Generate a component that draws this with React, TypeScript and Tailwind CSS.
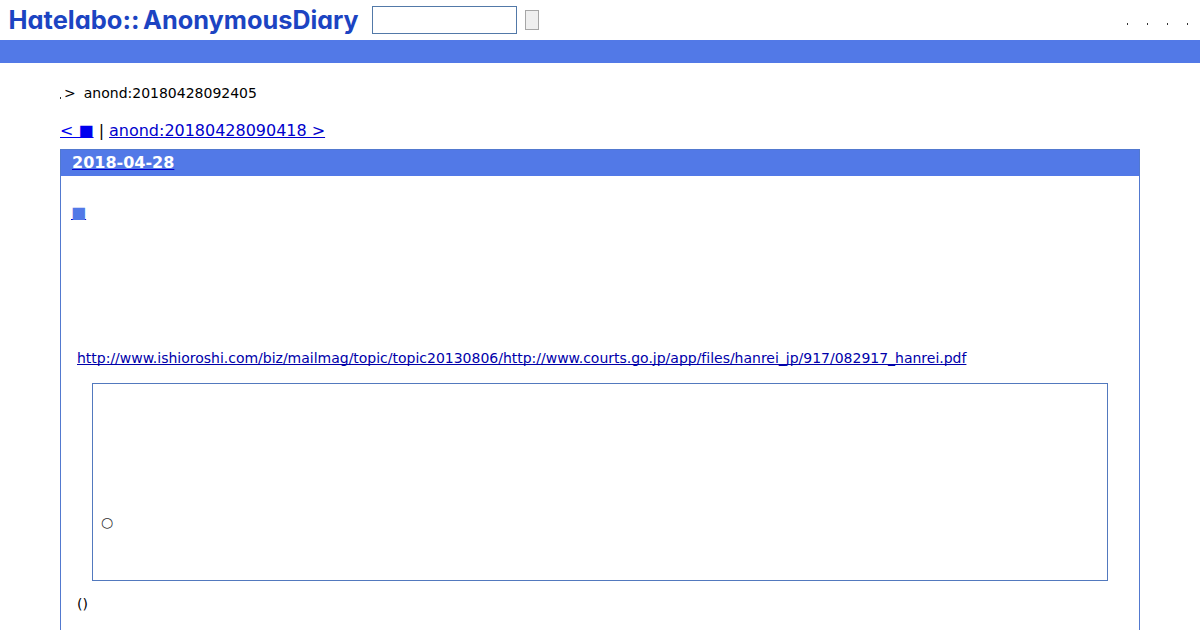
const menuItems = ['help', 'search', 'about', 'login'];

const Logo = () => (
  <svg
    width="364"
    height="40"
    viewBox="0 0 364 40"
    className="shrink-0 fill-[#1c44c2] font-['Inter'] text-[25px] font-bold [font-feature-settings:'cv11']"
  >
    <text x="8.5" y="29" textLength="131" lengthAdjust="spacingAndGlyphs">
      Hatelabo::
    </text>
    <text x="143" y="28.5" textLength="149.5" lengthAdjust="spacingAndGlyphs">
      Anonymous
    </text>
    <text x="292.5" y="28.5" textLength="66" lengthAdjust="spacingAndGlyphs">
      Diary
    </text>
  </svg>
);

const Header = () => (
  <header>
    <div className="flex h-10 items-center">
      <Logo />
      <input type="text" className="ml-2 h-7 w-[145px] border border-[#5279a8]" />
      <button className="ml-2 h-5 w-3.5 border border-[#a6a6a6] bg-[#efefef]" />
      <ul className="mt-2 mr-3 ml-auto flex gap-[19px]">
        {menuItems.map((item) => (
          <li key={item} className="h-0.5 w-px bg-[#333333]" />
        ))}
      </ul>
    </div>
    <div className="h-[23px] bg-[#5279e7]" />
  </header>
);

export default function App() {
  return (
    <div className="h-[630px] overflow-hidden bg-white font-['DejaVu_Sans',sans-serif] text-black [text-decoration-skip-ink:none]">
      <Header />
      <main className="px-[60px]">
        <div className="flex pt-[21px] text-sm leading-[18px]">
          <span className="mt-[13px] mr-[3px] h-0.5 w-px bg-[#333333]" />
          <span>&gt;</span>
          <span className="ml-2">anond:20180428092405</span>
        </div>
        <div className="pt-[19px] text-base leading-5 tracking-[-0.02px] whitespace-pre">
          <a href="#" className="text-[#0000ee] underline">&lt; ■</a>
          {' | '}
          <a href="#" className="text-[#0000cc] underline">anond:20180428090418 &gt;</a>
        </div>
        <section className="mt-2 h-[500px] border border-[#5279cf]">
          <h2 className="h-[26px] bg-[#5279e7] pl-[11px] text-base leading-[26px] font-bold">
            <a href="#" className="text-white underline decoration-[#0000cc]">2018-04-28</a>
          </h2>
          <h3 className="pt-[27px] pl-2.5 text-base leading-5 font-bold">
            <a href="#" className="text-[#5279e7] underline decoration-[#0000cc]">■</a>
          </h3>
          <p className="mt-[126px] pl-4 text-sm leading-[18px] tracking-[-0.01px]">
            <a href="#" className="text-[#0000aa] underline">
              http://www.ishioroshi.com/biz/mailmag/topic/topic20130806/http://www.courts.go.jp/app/files/hanrei_jp/917/082917_hanrei.pdf
            </a>
          </p>
          <blockquote className="mx-[31px] mt-4 h-[198px] border border-[#5279be] pt-[129px] pl-2 text-sm leading-[18px] text-[#333333]">
            ○
          </blockquote>
          <p className="mt-3.5 pl-4 text-sm leading-[18px]">()</p>
        </section>
      </main>
    </div>
  );
}
